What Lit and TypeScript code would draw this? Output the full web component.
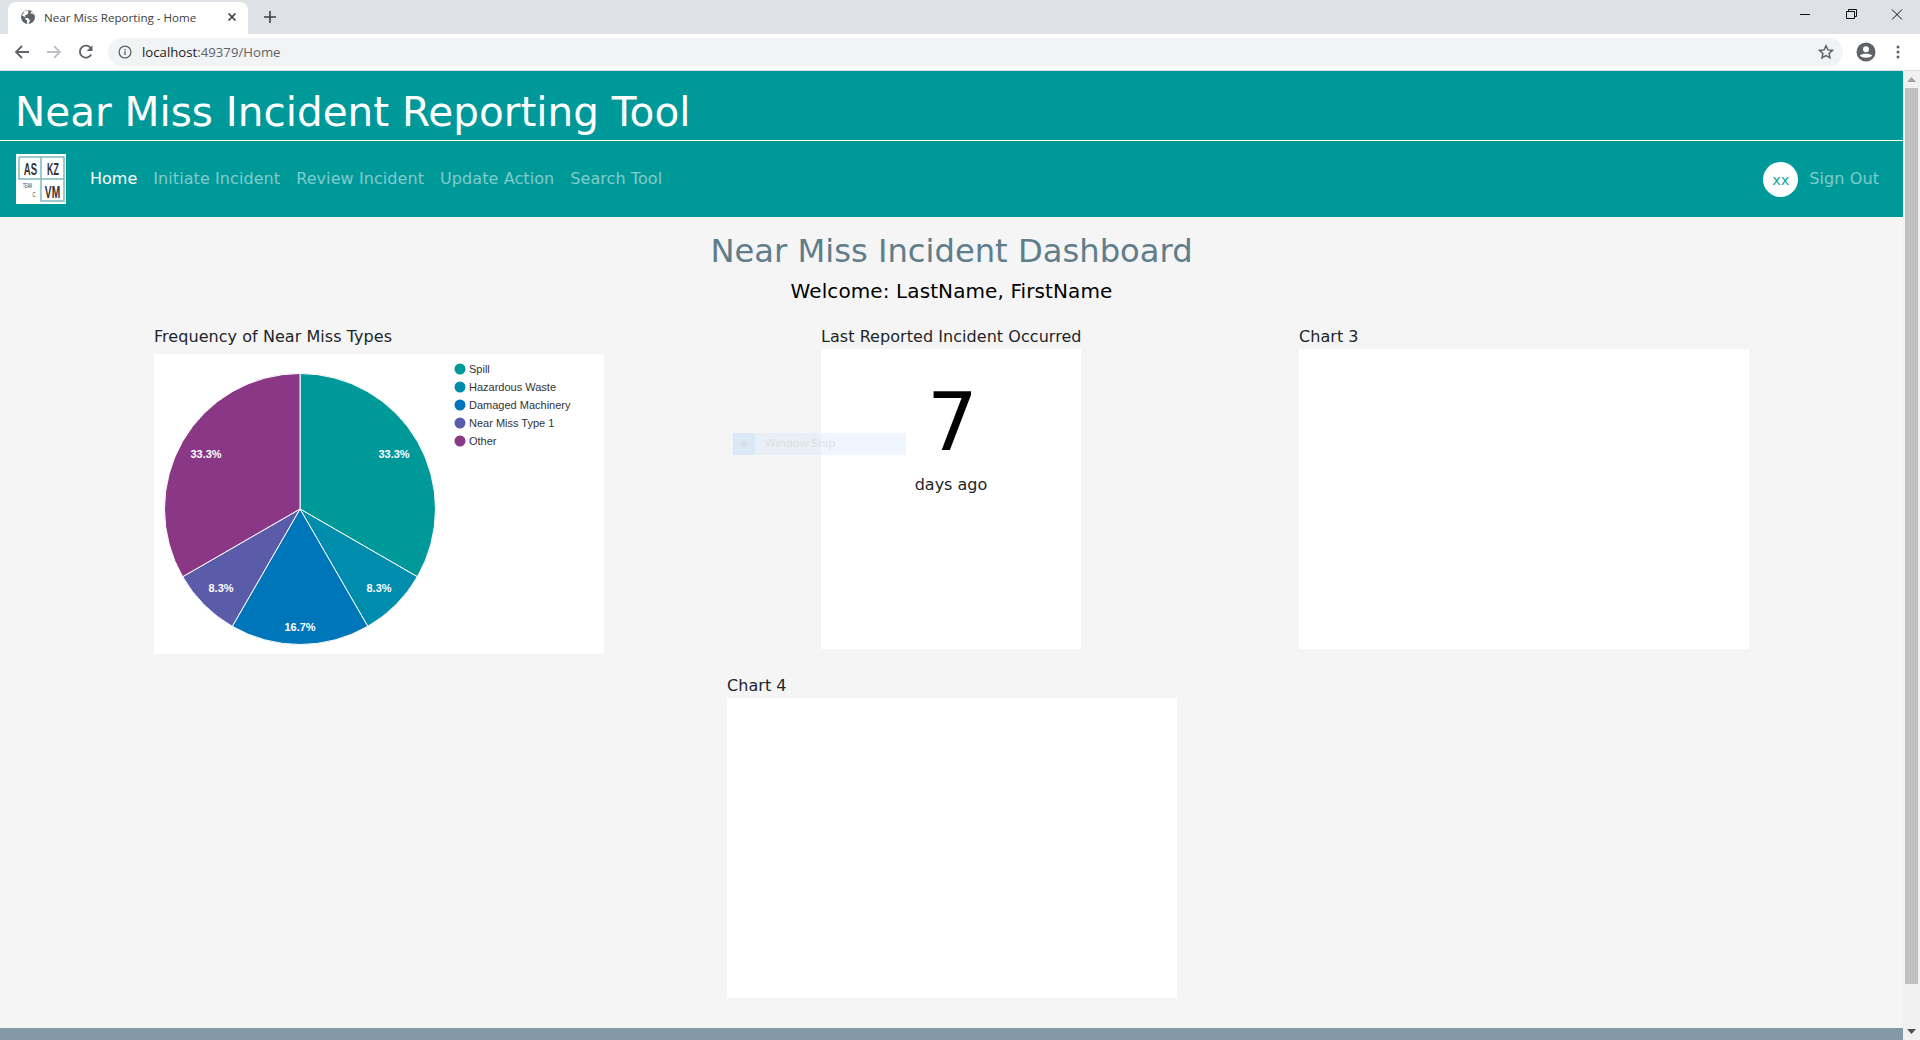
import {LitElement, html, svg, css} from 'lit'
import {customElement} from 'lit/decorators.js'

const slices = [
  {name: 'Spill', pct: '33.3%', from: 0, to: 120, color: '#009999', lx: 240, ly: 100},
  {name: 'Hazardous Waste', pct: '8.3%', from: 120, to: 150, color: '#008cad', lx: 225, ly: 234},
  {name: 'Damaged Machinery', pct: '16.7%', from: 150, to: 210, color: '#0076ba', lx: 146, ly: 273},
  {name: 'Near Miss Type 1', pct: '8.3%', from: 210, to: 240, color: '#5a5caa', lx: 67, ly: 234},
  {name: 'Other', pct: '33.3%', from: 240, to: 360, color: '#8a3885', lx: 52, ly: 100},
]

const navLinks = ['Initiate Incident', 'Review Incident', 'Update Action', 'Search Tool']

// point on the pie, angle clockwise from twelve o'clock
function pt(deg: number) {
  const a = (deg * Math.PI) / 180
  return `${(146 + 135.5 * Math.sin(a)).toFixed(2)} ${(155 - 135.5 * Math.cos(a)).toFixed(2)}`
}

@customElement('app-root')
export class AppRoot extends LitElement {
  static styles = css`
    :host {
      display: flex;
      flex-direction: column;
      width: 1920px;
      height: 1040px;
      overflow: hidden;
      position: relative;
      font-family: 'DejaVu Sans', Verdana, sans-serif;
      background: #f5f5f5;
    }

    /* browser chrome */
    .tabstrip {
      height: 34px;
      background: #dee1e6;
      display: flex;
      align-items: flex-end;
      font-family: 'Open Sans', 'Noto Sans', sans-serif;
    }
    .tab {
      width: 240px;
      height: 32px;
      margin-left: 8px;
      background: #fff;
      border-radius: 8px 8px 0 0;
      display: flex;
      align-items: center;
      padding: 0 11px 2px 13px;
      box-sizing: border-box;
      font-size: 11.6px;
      color: #3c4043;
    }
    .tab-title {
      flex: 1;
      margin-left: 9px;
      white-space: nowrap;
    }
    .newtab {
      margin: 0 0 1px 16px;
      align-self: center;
      display: flex;
    }
    .winctl {
      margin-left: auto;
      align-self: flex-start;
      display: flex;
    }
    .winctl svg {
      width: 46px;
      height: 28px;
    }
    .toolbar {
      height: 36px;
      background: #fff;
      border-bottom: 1px solid #dadce0;
      display: flex;
      align-items: center;
      padding: 0 0 0 14px;
      font-family: 'Open Sans', 'Noto Sans', sans-serif;
    }
    .toolbar > svg {
      flex: none;
    }
    .nav-icon {
      margin-right: 16px;
    }
    .omnibox {
      flex: none;
      width: 1735px;
      height: 28px;
      margin-left: -2px;
      border-radius: 14px;
      background: #f1f3f4;
      display: flex;
      align-items: center;
      padding: 0 9px 0 10px;
      box-sizing: border-box;
      font-size: 13.2px;
      color: #5f6368;
    }
    .omnibox b {
      font-weight: 400;
      color: #202124;
    }
    .url {
      margin-left: 10px;
      flex: 1;
    }
    .acct {
      margin-left: 13px;
    }
    .dots {
      margin-left: 20px;
    }

    /* page */
    .viewport {
      flex: 1;
      display: flex;
      min-height: 0;
    }
    .page {
      width: 1903px;
      display: flex;
      flex-direction: column;
    }
    .scrollbar {
      width: 17px;
      background: #f1f1f1;
      display: flex;
      flex-direction: column;
      align-items: center;
    }
    .thumb {
      width: 13px;
      height: 896px;
      background: #c1c1c1;
      margin: 0 0 auto;
    }
    .arrow {
      height: 17px;
      display: flex;
      align-items: center;
      justify-content: center;
    }
    .brand {
      height: 69px;
      background: #009999;
      border-bottom: 1px solid #fff;
      color: #fff;
      font-size: 40.5px;
      line-height: 82px;
      padding-left: 15px;
      margin: 0;
      font-weight: 400;
    }
    .navbar {
      height: 76px;
      background: #009999;
      display: flex;
      align-items: center;
      padding: 0 24px 1px 16px;
      box-sizing: border-box;
      font-size: 16px;
      letter-spacing: 0.08px;
      color: rgba(255, 255, 255, 0.5);
    }
    .logo {
      width: 50px;
      height: 50px;
      margin: 1px 24px 0 0;
      display: block;
    }
    .links {
      display: flex;
      gap: 16px;
    }
    .links .active {
      color: #fff;
      letter-spacing: 0;
    }
    .user {
      margin-left: auto;
      display: flex;
      align-items: center;
      gap: 11px;
    }
    .avatar {
      width: 35px;
      height: 35px;
      margin-top: 2px;
      border-radius: 50%;
      background: #fff;
      color: #1aa3a3;
      display: flex;
      align-items: center;
      justify-content: center;
      font-size: 14.5px;
      letter-spacing: 0;
    }
    main {
      flex: 1;
      background: #f5f5f5;
    }
    .dash-title {
      margin: 14px 0 0;
      text-align: center;
      font-size: 32.2px;
      line-height: 40px;
      font-weight: 400;
      color: #607d8b;
    }
    .welcome {
      margin: 5px 0 0;
      text-align: center;
      font-size: 20px;
      line-height: 30px;
      letter-spacing: 0.1px;
      font-weight: 400;
      color: #000;
    }
    .row-one {
      margin-top: 19px;
      padding-left: 93px;
      display: grid;
      grid-template-columns: 572px 572px 574px;
      justify-items: center;
    }
    .row-two {
      margin-top: 20px;
      padding-left: 1px;
      display: flex;
      justify-content: center;
    }
    .label {
      font-size: 16px;
      line-height: 24px;
      letter-spacing: 0.05px;
      color: #212529;
      white-space: nowrap;
    }
    .card {
      width: 450px;
      height: 300px;
      background: #fff;
    }
    .col-narrow {
      width: 260px;
    }
    .card.narrow {
      width: 260px;
      text-align: center;
    }
    .card.pie {
      margin-top: 5px;
    }
    .pie svg {
      display: block;
    }
    .big {
      font-size: 80px;
      line-height: 96px;
      padding: 26px 0 0 3px;
      color: #000;
    }
    .ago {
      margin-top: 2px;
      font-size: 16px;
      line-height: 24px;
      color: #212529;
    }
    footer {
      height: 12px;
      background: #8499a8;
    }

    /* screen snip toast caught in the screenshot */
    .snip {
      position: absolute;
      left: 733px;
      top: 433px;
      width: 173px;
      height: 22px;
      display: flex;
      align-items: center;
      background: rgba(205, 228, 250, 0.32);
      font-size: 11.6px;
      font-family: 'Open Sans', 'Noto Sans', sans-serif;
      color: #dcdfe2;
    }
    .snip-text {
      margin-top: -3px;
    }
    .snip-icon {
      width: 22px;
      height: 22px;
      margin-right: 10px;
      background: rgba(170, 205, 240, 0.22);
      display: flex;
      align-items: center;
      justify-content: center;
    }
    .snip-icon i {
      width: 6px;
      height: 6px;
      border-radius: 50%;
      background: #d5dce3;
    }
  `

  renderLogo() {
    return html`<svg class="logo" viewBox="0 0 50 50">
      <rect width="50" height="50" fill="#fff" />
      <path d="M3 3H48V25H25V47H48V25M25 3V25M3 3V25H25" fill="none" stroke="#7db9b9" stroke-width="1.5" />
      <g font-family="'Liberation Sans', sans-serif" fill="#333" text-anchor="middle">
        <g font-size="17" font-weight="700">
          <text transform="translate(14.500 21) scale(0.56 1)">AS</text>
          <text transform="translate(37 21) scale(0.52 1)">KZ</text>
          <text transform="translate(36.500 44) scale(0.6 1)">VM</text>
        </g>
        <text transform="translate(11.500 34) scale(0.5 1)" font-size="6.500">TEAM</text>
        <text transform="translate(18 43) scale(0.6 1)" font-size="7">C</text>
      </g>
    </svg>`
  }

  renderPie() {
    return html`<svg width="450" height="300" viewBox="0 0 450 300" font-family="'Liberation Sans', Arial, sans-serif">
      ${slices.map(
        (s) => svg`<path d="M146 155L${pt(s.from)}A135.5 135.5 0 0 1 ${pt(s.to)}Z" fill=${s.color} stroke="#fff" stroke-width="1" />`,
      )}
      ${slices.map(
        (s) => svg`<text x=${s.lx} y=${s.ly} fill="#fff" font-size="11" font-weight="700" text-anchor="middle" dominant-baseline="central">${s.pct}</text>`,
      )}
      ${slices.map(
        (s, i) => svg`
          <circle cx="306" cy=${15 + i * 18} r="5.5" fill=${s.color} />
          <text x="315" y=${15 + i * 18} fill="#333" font-size="11" dominant-baseline="central">${s.name}</text>
        `,
      )}
    </svg>`
  }

  render() {
    return html`
      <div class="tabstrip">
        <div class="tab">
          <svg width="14" height="14" viewBox="0 0 14 14">
            <circle cx="7" cy="7" r="7" fill="#5f6368" />
            <path d="M1 5.500 4 7l.5 2.500L6 10.500V13.500L7.500 14 9 10.500 7 8H4.500L4 5.500 7 4 7.500.3 3.500 1ZM10 1.500 9.500 3.500H11L13.300 5 12.500 2.500Z" fill="#fff" />
          </svg>
          <span class="tab-title">Near Miss Reporting - Home</span>
          <svg width="10" height="10" viewBox="0 0 10 10">
            <path d="M1.500 1.500l7 7M8.500 1.500l-7 7" stroke="#3c4043" stroke-width="1.700" />
          </svg>
        </div>
        <svg class="newtab" width="12" height="12" viewBox="0 0 12 12">
          <path d="M6 0V12M0 6H12" stroke="#3c4043" stroke-width="1.600" />
        </svg>
        <div class="winctl">
          <svg viewBox="0 0 46 28"><path d="M18 14.500H28" stroke="#111" /></svg>
          <svg viewBox="0 0 46 28"><path d="M18.500 11.500H26.500V18.500H18.500ZM20.500 11V9.500H28.500V16.500H27" fill="none" stroke="#111" /></svg>
          <svg viewBox="0 0 46 28"><path d="M18 9.500 28 19.500M28 9.500 18 19.500" stroke="#111" /></svg>
        </div>
      </div>
      <div class="toolbar">
        <svg class="nav-icon" width="16" height="16" viewBox="0 0 16 16">
          <path d="M15 8H2.500M8 2 2 8l6 6" fill="none" stroke="#5f6368" stroke-width="1.800" />
        </svg>
        <svg class="nav-icon" width="16" height="16" viewBox="0 0 16 16">
          <path d="M1 8H13.500M8 2l6 6-6 6" fill="none" stroke="#bdc1c6" stroke-width="1.800" />
        </svg>
        <svg class="nav-icon" width="16" height="16" viewBox="0 0 16 16">
          <path d="M13.200 10.500A6 6 0 1 1 13 4.500" fill="none" stroke="#5f6368" stroke-width="1.800" />
          <path d="M14.500 1.200V7H8.700Z" fill="#5f6368" />
        </svg>
        <div class="omnibox">
          <svg width="14" height="14" viewBox="0 0 14 14">
            <circle cx="7" cy="7" r="5.900" fill="none" stroke="#5f6368" stroke-width="1.300" />
            <path d="M7 6.200V10M7 4V5.300" stroke="#5f6368" stroke-width="1.400" />
          </svg>
          <span class="url"><b>localhost</b>:49379/Home</span>
          <svg width="16" height="16" viewBox="0 0 16 16">
            <path d="M8 1.800l1.900 4.100 4.500.5-3.300 3 .9 4.400L8 11.600l-4 2.200.9-4.400-3.300-3 4.500-.5Z" fill="none" stroke="#5f6368" stroke-width="1.500" />
          </svg>
        </div>
        <svg class="acct" width="20" height="20" viewBox="0 0 20 20">
          <circle cx="10" cy="10" r="9.500" fill="#5f6368" />
          <circle cx="10" cy="7.200" r="3" fill="#fff" />
          <path d="M3.800 13.500C6 11 14 11 16.200 13.500 14 16.500 6 16.500 3.800 13.500Z" fill="#fff" />
        </svg>
        <svg class="dots" width="4" height="14" viewBox="0 0 4 14">
          <circle cx="2" cy="2" r="1.500" fill="#5f6368" />
          <circle cx="2" cy="7" r="1.500" fill="#5f6368" />
          <circle cx="2" cy="12" r="1.500" fill="#5f6368" />
        </svg>
      </div>
      <div class="viewport">
        <div class="page">
          <h1 class="brand">Near Miss Incident Reporting Tool</h1>
          <nav class="navbar">
            ${this.renderLogo()}
            <div class="links">
              <span class="active">Home</span>
              ${navLinks.map((l) => html`<span>${l}</span>`)}
            </div>
            <div class="user">
              <span class="avatar">xx</span>
              <span>Sign Out</span>
            </div>
          </nav>
          <main>
            <h2 class="dash-title">Near Miss Incident Dashboard</h2>
            <h3 class="welcome">Welcome: LastName, FirstName</h3>
            <div class="row-one">
              <div>
                <div class="label">Frequency of Near Miss Types</div>
                <div class="card pie">${this.renderPie()}</div>
              </div>
              <div class="col-narrow">
                <div class="label">Last Reported Incident Occurred</div>
                <div class="card narrow">
                  <div class="big">7</div>
                  <div class="ago">days ago</div>
                </div>
              </div>
              <div>
                <div class="label">Chart 3</div>
                <div class="card"></div>
              </div>
            </div>
            <div class="row-two">
              <div>
                <div class="label">Chart 4</div>
                <div class="card"></div>
              </div>
            </div>
          </main>
          <footer></footer>
        </div>
        <div class="scrollbar">
          <div class="arrow">
            <svg width="9" height="5" viewBox="0 0 9 5"><path d="M4.500 0 9 5H0Z" fill="#a3a3a3" /></svg>
          </div>
          <div class="thumb"></div>
          <div class="arrow">
            <svg width="9" height="5" viewBox="0 0 9 5"><path d="M4.500 5 9 0H0Z" fill="#505050" /></svg>
          </div>
        </div>
      </div>
      <div class="snip">
        <span class="snip-icon"><i></i></span>
        <span class="snip-text">Window Snip</span>
      </div>
    `
  }
}
